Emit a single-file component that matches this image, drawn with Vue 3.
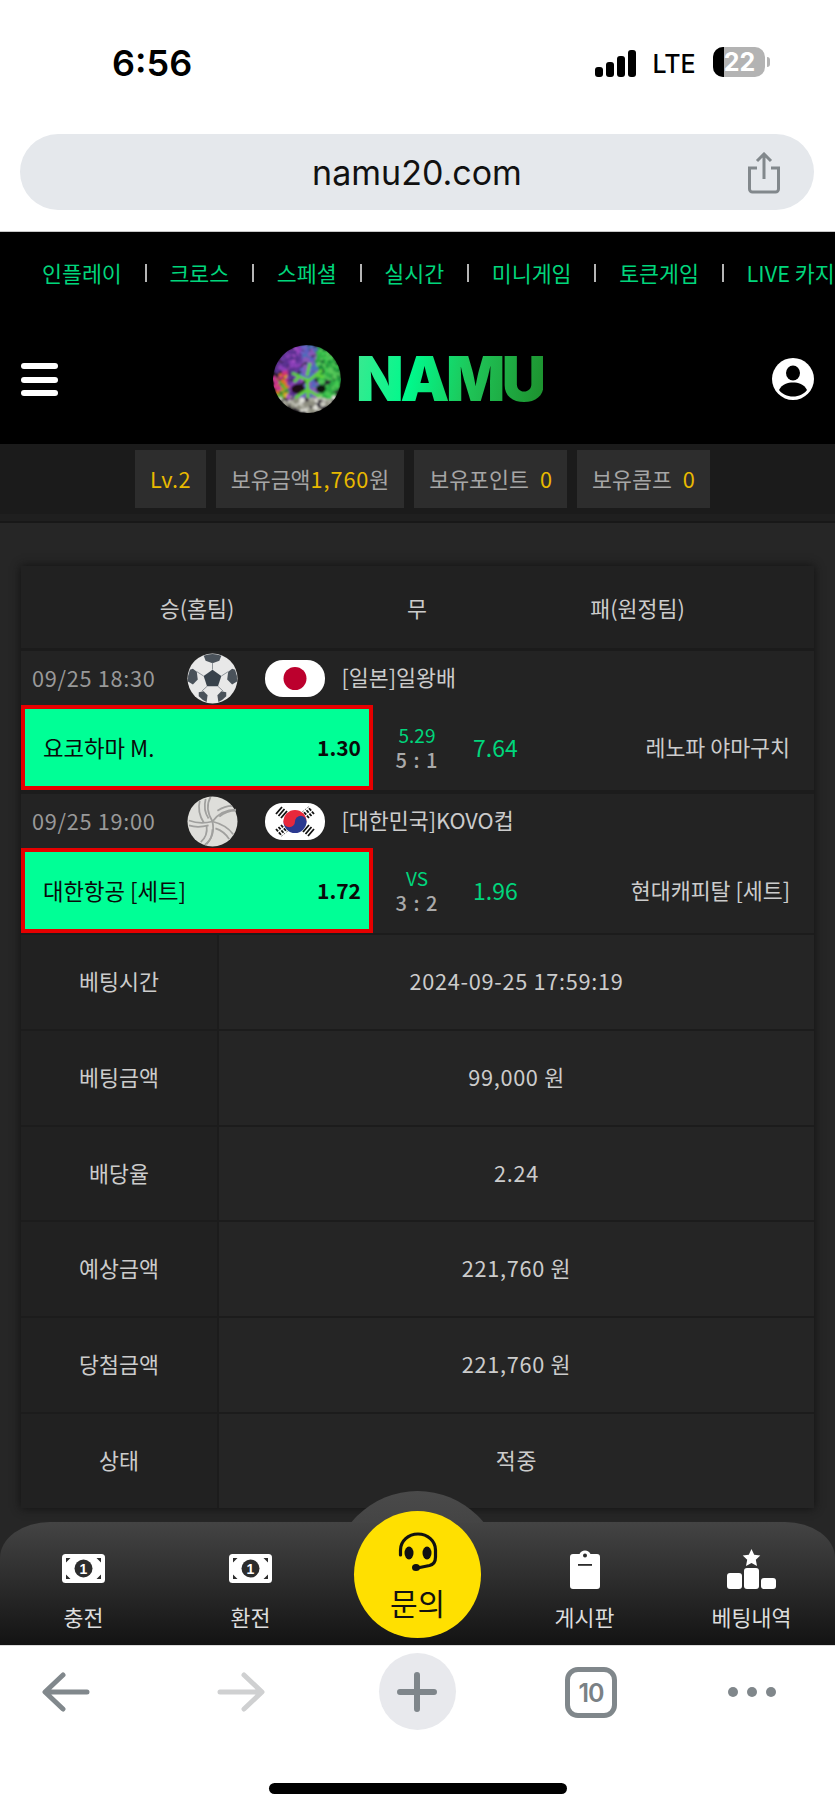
<template>
  <div class="page">
    <!-- 브라우저 상단 -->
    <div class="phone-top">
      <div class="status">
        <span class="clock">6:56</span>
        <div class="status-right">
          <div class="signal">
            <i v-for="h in signalBars" :key="h" :style="{ height: h + 'px' }"></i>
          </div>
          <span class="lte">LTE</span>
          <div class="battery"><b></b><span>22</span></div>
          <i class="nub"></i>
        </div>
      </div>
      <div class="urlbar">
        <span>namu20.com</span>
        <svg class="share" width="36" height="42" viewBox="0 0 36 42" fill="none" stroke="#82888c" stroke-width="3">
          <path d="M18 27V3M11 9l7-7 7 7" />
          <path d="M11 16H3.500v21a3 3 0 0 0 3 3h23a3 3 0 0 0 3-3V16H25" />
        </svg>
      </div>
    </div>

    <nav class="site-nav">
      <template v-for="(m, i) in menus" :key="m">
        <i v-if="i" class="sep"></i>
        <a>{{ m }}</a>
      </template>
    </nav>

    <header class="site-header">
      <div class="burger"><i></i><i></i><i></i></div>
      <div class="logo">
        <svg class="tree" width="72" height="74" viewBox="0 0 72 74">
          <defs>
            <clipPath id="treeClip"><circle cx="36" cy="37" r="34" /></clipPath>
            <filter id="soft"><feGaussianBlur stdDeviation="1" /></filter>
          </defs>
          <g filter="url(#soft)" clip-path="url(#treeClip)">
            <circle cx="36" cy="37" r="34" fill="#2a2230" />
            <circle v-for="(l, i) in leaves" :key="i" :cx="l.x" :cy="l.y" :r="l.r" :fill="l.c" />
            <ellipse cx="27" cy="47" rx="7" ry="5" fill="#1c1018" />
            <ellipse cx="50" cy="47" rx="5" ry="4" fill="#10180f" />
            <path d="M37 56c0-9-1-14-1-20M36 38L21 31M36 40l15-12M36 34l3-13M36 48L24 56M37 48l12 7M28 35l-5 5M45 33l8 2" stroke="#5fd13c" stroke-width="3" fill="none" />
          </g>
        </svg>
        <span class="logo-word">NAMU</span>
      </div>
      <svg class="user" width="42" height="42" viewBox="0 0 42 42">
        <circle cx="21" cy="21" r="21" fill="#fff" />
        <ellipse cx="21" cy="15" rx="7" ry="7.500" fill="#000" />
        <path d="M7 32c3-6 9-7.500 14-7.500S32 26 35 32c-3 4-8 6.500-14 6.500S10 36 7 32z" fill="#000" />
      </svg>
    </header>

    <div class="infobar">
      <div class="chip gold">Lv.2</div>
      <div class="chip">보유금액<em class="money">1,760</em>원</div>
      <div class="chip">보유포인트<em class="sp">0</em></div>
      <div class="chip">보유콤프<em class="sp">0</em></div>
    </div>
    <div class="infobar-edge"></div>

    <main class="content">
      <section class="card">
        <div class="card-head">
          <span>승(홈팀)</span>
          <span>무</span>
          <span>패(원정팀)</span>
        </div>

        <div v-for="g in games" :key="g.time" class="match">
          <div class="match-info">
            <span class="time">{{ g.time }}</span>
            <svg v-if="g.sport === 'soccer'" class="ball" viewBox="0 0 52 52">
              <circle cx="26" cy="26" r="25.500" fill="#e8e8e8" />
              <path d="M26 17l9 6.500-3.400 10.500H20.400L17 23.500z" fill="#39424b" />
              <path d="M26 1a25 25 0 0 0-9 1.800L19 8l7 2.500L33 8l2-5.200A25 25 0 0 0 26 1z" fill="#4a525a" />
              <path d="M3 17a25 25 0 0 0-2 12l5 3 5-5-1-8-4-3z" fill="#4a525a" />
              <path d="M49 17a25 25 0 0 1 2 12l-5 3-5-5 1-8 4-3z" fill="#4a525a" />
              <path d="M12 44a25 25 0 0 0 8 6l1-7-4-4-5 1z" fill="#4a525a" />
              <path d="M40 44a25 25 0 0 1-8 6l-1-7 4-4 5 1z" fill="#4a525a" />
              <path d="M26 10v7M17 23.500l-7-4.500M35 23.500l7-4.500M20.400 34L15 39M31.600 34L37 39" stroke="#8c9298" stroke-width="1" />
            </svg>
            <svg v-else class="ball" viewBox="0 0 52 52">
              <circle cx="26" cy="26" r="25.500" fill="#dededa" />
              <g fill="none" stroke="#a0a09e" stroke-width="1.800">
                <path d="M26 26C20 16 20 8 24 1M26 26c6-8 14-12 24-12M26 26c2 10 0 18-8 24" />
                <path d="M19 3c-2 8-1 14 3 20M13 5c-2 8-1 14 4 22M33 21c6-5 11-6 17-6M31 15c6-4 11-5 15-5M26 34c0 6-2 11-6 15M20 30c1 8-1 13-6 17" />
                <path d="M26 26c-8 2-16 2-24-1M26 26c8 2 16 6 21 13M22 30c-8 2-14 2-20 0M29 33c6 2 11 6 14 11" />
              </g>
            </svg>
            <span class="flag">
              <svg v-if="g.sport === 'soccer'" width="60" height="37" viewBox="0 0 60 37">
                <circle cx="30" cy="18.500" r="11.500" fill="#bc002d" />
              </svg>
              <svg v-else width="60" height="37" viewBox="0 0 60 37">
                <path d="M18.500 18.500a11.500 11.500 0 0 1 23 0z" fill="#e8283c" />
                <path d="M18.500 18.500a11.500 11.500 0 0 0 23 0z" fill="#2b3990" />
                <circle cx="24.250" cy="18.500" r="5.750" fill="#e8283c" />
                <circle cx="35.750" cy="18.500" r="5.750" fill="#2b3990" />
                <g stroke="#111" stroke-width="1.800">
                  <path d="M11 11l6-7M13.500 13l6-7M16 15l6-7" />
                  <path d="M49 11l-6-7M46.500 13l-6-7M44 15l-6-7" stroke-dasharray="3.200 1.200" />
                  <path d="M11 26l6 7M13.500 24l6 7M16 22l6 7" stroke-dasharray="3.200 1.200" />
                  <path d="M49 26l-6 7M46.500 24l-6 7M44 22l-6 7" />
                </g>
              </svg>
            </span>
            <span class="league">{{ g.league }}</span>
          </div>
          <div class="match-bet">
            <div class="pick">
              <span>{{ g.home }}</span>
              <b>{{ g.homeOdds }}</b>
            </div>
            <div class="mid">
              <span class="draw">{{ g.draw }}</span>
              <span class="score">{{ g.score }}</span>
            </div>
            <div class="away">
              <span class="away-odds">{{ g.awayOdds }}</span>
              <span>{{ g.away }}</span>
            </div>
          </div>
        </div>

        <div class="details">
          <div v-for="d in details" :key="d.label" class="detail">
            <div class="detail-label">{{ d.label }}</div>
            <div class="detail-value">{{ d.value }}</div>
          </div>
        </div>
      </section>
    </main>

    <footer class="tabbar">
      <div class="bump"></div>
      <a class="tab">
        <span class="tab-icon">
          <svg class="bill" width="43" height="29" viewBox="0 0 43 29">
            <rect width="43" height="29" rx="3.500" fill="#fff" />
            <path d="M4 4h4.500L4 8.500zM39 4h-4.500L39 8.500zM4 25h4.500L4 20.500zM39 25h-4.500L39 20.500z" fill="#2c2c2c" />
            <circle cx="21.500" cy="14.500" r="9" fill="#2c2c2c" />
            <text x="21.500" y="19.500" class="bill-num">1</text>
          </svg>
        </span>
        <span>충전</span>
      </a>
      <a class="tab">
        <span class="tab-icon">
          <svg class="bill" width="43" height="29" viewBox="0 0 43 29">
            <rect width="43" height="29" rx="3.500" fill="#fff" />
            <path d="M4 4h4.500L4 8.500zM39 4h-4.500L39 8.500zM4 25h4.500L4 20.500zM39 25h-4.500L39 20.500z" fill="#2c2c2c" />
            <circle cx="21.500" cy="14.500" r="9" fill="#2c2c2c" />
            <text x="21.500" y="19.500" class="bill-num">1</text>
          </svg>
        </span>
        <span>환전</span>
      </a>
      <div class="tab-spacer"></div>
      <a class="tab">
        <span class="tab-icon">
          <svg width="30" height="40" viewBox="0 0 30 40">
            <path d="M3 5h6.500a6 6 0 0 1 11 0H27a3 3 0 0 1 3 3v29a3 3 0 0 1-3 3H3a3 3 0 0 1-3-3V8a3 3 0 0 1 3-3z" fill="#fff" />
            <circle cx="15" cy="6.500" r="2" fill="#2c2c2c" />
            <rect x="8" y="15" width="14" height="1.800" fill="#2c2c2c" />
          </svg>
        </span>
        <span>게시판</span>
      </a>
      <a class="tab">
        <span class="tab-icon">
          <svg width="49" height="40" viewBox="0 0 49 40">
            <path d="M24.500 0l2.700 5.700 6.100.8-4.500 4.300 1.200 6.200-5.500-3-5.500 3 1.200-6.200-4.500-4.300 6.100-.8z" fill="#fff" />
            <rect x="0" y="24" width="15" height="16" rx="3" fill="#fff" />
            <rect x="17" y="19" width="15" height="21" rx="3" fill="#fff" />
            <rect x="34" y="29" width="15" height="11" rx="3" fill="#fff" />
          </svg>
        </span>
        <span>베팅내역</span>
      </a>
      <a class="ask">
        <svg width="40" height="40" viewBox="0 0 40 40" fill="none">
          <path d="M2.500 23V18a17.500 16 0 0 1 35 0v7c0 5-2 7.500-6 8.500l-11 2.300" stroke="#111" stroke-width="3.200" stroke-linecap="round" />
          <ellipse cx="11" cy="21" rx="4.500" ry="6.500" fill="#111" />
          <ellipse cx="29" cy="21" rx="4.500" ry="6.500" fill="#111" />
          <ellipse cx="18" cy="35.500" rx="4" ry="3.500" fill="#111" />
        </svg>
        <span>문의</span>
      </a>
    </footer>

    <!-- 브라우저 하단 -->
    <div class="toolbar">
      <div class="tools">
        <svg width="48" height="40" viewBox="0 0 48 40" fill="none" stroke="#81888c" stroke-width="5" stroke-linecap="round" stroke-linejoin="round">
          <path d="M45 20H4M21 3L3 20l18 17" />
        </svg>
        <svg width="48" height="40" viewBox="0 0 48 40" fill="none" stroke="#cfd0d1" stroke-width="5" stroke-linecap="round" stroke-linejoin="round">
          <path d="M3 20h41M27 3l18 17-18 17" />
        </svg>
        <div class="plus">
          <svg width="40" height="40" viewBox="0 0 40 40" stroke="#7f868b" stroke-width="6" stroke-linecap="round">
            <path d="M20 3v34M3 20h34" />
          </svg>
        </div>
        <div class="tabs-count">10</div>
        <div class="dots"><i></i><i></i><i></i></div>
      </div>
      <div class="home-bar"></div>
    </div>
  </div>
</template>

<script setup>
const signalBars = [10, 15, 21, 27];

const menus = ["인플레이", "크로스", "스페셜", "실시간", "미니게임", "토큰게임", "LIVE 카지노"];

const games = [
  {
    time: "09/25 18:30",
    sport: "soccer",
    league: "[일본]일왕배",
    home: "요코하마 M.",
    homeOdds: "1.30",
    draw: "5.29",
    score: "5 : 1",
    awayOdds: "7.64",
    away: "레노파 야마구치",
  },
  {
    time: "09/25 19:00",
    sport: "volley",
    league: "[대한민국]KOVO컵",
    home: "대한항공 [세트]",
    homeOdds: "1.72",
    draw: "VS",
    score: "3 : 2",
    awayOdds: "1.96",
    away: "현대캐피탈 [세트]",
  },
];

const details = [
  { label: "베팅시간", value: "2024-09-25 17:59:19" },
  { label: "베팅금액", value: "99,000 원" },
  { label: "배당율", value: "2.24" },
  { label: "예상금액", value: "221,760 원" },
  { label: "당첨금액", value: "221,760 원" },
  { label: "상태", value: "적중" },
];

// 로고 나무의 잎: 위치에 따라 색이 바뀌는 작은 점들
let seed = 7;
const rnd = () => {
  seed = (seed * 16807) % 2147483647;
  return seed / 2147483647;
};

const pick = (list) => list[Math.floor(rnd() * list.length)];

const leafColor = (x, y) => {
  if (y > 55) return pick(["#c9c9bf", "#e0e0d8", "#a9a99c", "#8d8d7f"]);
  if (x > 46) return pick(["#2fae45", "#3fc94f", "#1f8f3a", "#58c85a"]);
  if (x < 17 && y > 30) return pick(["#d23a5a", "#e0b020", "#c93090", "#e07020", "#60b030"]);
  if (x < 30) return pick(["#8a3fb8", "#a84fc8", "#6a3aa0", "#5a3090"]);
  return pick(["#5a60c0", "#7060c8", "#4a70b8", "#8a58b8"]);
};

const leaves = Array.from({ length: 500 }, () => {
  const a = rnd() * Math.PI * 2;
  const d = Math.sqrt(rnd()) * 34;
  const x = 36 + Math.cos(a) * d;
  const y = 37 + Math.sin(a) * d;
  return { x, y, r: 1.4 + rnd() * 1.6, c: leafColor(x, y) };
});
</script>

<style scoped>
.page {
  width: 835px;
  height: 1811px;
  overflow: hidden;
  background: #262626;
  font-family: "Noto Sans CJK KR", "Noto Sans", sans-serif;
  font-size: 21.700px;
  color: #ccc;
}

.phone-top {
  height: 232px;
  box-sizing: border-box;
  background: #fff;
  border-bottom: 1px solid #c8c8c8;
  font-family: Inter, "Liberation Sans", sans-serif;
  color: #000;
}

.status {
  height: 134px;
  position: relative;
}

.clock {
  position: absolute;
  left: 112px;
  top: 41px;
  font-size: 36px;
  line-height: 44px;
  font-weight: 600;
}

.status-right {
  position: absolute;
  left: 595px;
  top: 47px;
  display: flex;
  align-items: flex-end;
  height: 30px;
}

.signal {
  display: flex;
  align-items: flex-end;
  gap: 3.500px;
  height: 28px;
}

.signal i {
  width: 7.500px;
  background: #000;
  border-radius: 3px;
}

.lte {
  margin-left: 17px;
  font-size: 25px;
  line-height: 30px;
  height: 28px;
  font-weight: 500;
}

.battery {
  position: relative;
  margin-left: 17px;
  width: 52px;
  height: 30px;
  border-radius: 10px;
  background: #b3b3b3;
}

.battery b {
  display: block;
  width: 11px;
  height: 100%;
  background: #000;
  border-radius: 10px 0 0 10px;
}

.battery span {
  position: absolute;
  left: 11px;
  top: 0;
  font-size: 25px;
  line-height: 30px;
  font-weight: 700;
  color: #fff;
}

.nub {
  width: 3px;
  height: 10px;
  margin: 0 0 10px 2px;
  background: #b3b3b3;
  border-radius: 0 3px 3px 0;
}

.urlbar {
  position: relative;
  margin: 0 21px 0 20px;
  height: 76px;
  border-radius: 38px;
  background: #e5e8ec;
  display: flex;
  align-items: center;
  justify-content: center;
  font-size: 34px;
  color: #111;
}

.share {
  position: absolute;
  left: 726px;
  top: 18px;
}

.site-nav {
  height: 82px;
  box-sizing: border-box;
  padding: 23px 0 0 42px;
  background: #000;
  display: flex;
  align-items: flex-start;
  white-space: nowrap;
  overflow: hidden;
  color: #00d67c;
  line-height: 36px;
}

.site-nav .sep {
  flex: none;
  width: 2px;
  height: 18px;
  margin: 9px 22.800px 0;
  background: #b5b5b5;
}

.site-header {
  height: 130px;
  background: #000;
  position: relative;
  display: flex;
  align-items: flex-start;
  justify-content: space-between;
  padding: 0 21px;
  box-sizing: border-box;
}

.burger {
  margin-top: 49px;
  width: 37px;
  display: flex;
  flex-direction: column;
  gap: 7.500px;
}

.burger i {
  height: 6px;
  border-radius: 3px;
  background: #fff;
}

.logo {
  position: absolute;
  left: 271px;
  top: 28px;
  display: flex;
  align-items: center;
}

.logo-word {
  margin-left: 13px;
  font-family: Inter, "Liberation Sans", sans-serif;
  font-weight: 900;
  font-size: 62px;
  line-height: 74px;
  letter-spacing: -3.500px;
  background: linear-gradient(100deg, #3ce890 0%, #00f98c 30%, #1fc558 60%, #1d8f2c 100%);
  -webkit-background-clip: text;
  background-clip: text;
  color: transparent;
  filter: blur(0.700px);
}

.user {
  margin-top: 44px;
}

.infobar {
  height: 64px;
  box-sizing: border-box;
  padding: 6px 0 0 10px;
  background: #1b1b1b;
  display: flex;
  justify-content: center;
  gap: 10px;
}

.chip {
  height: 58px;
  padding: 0 15px;
  background: #2d2d2d;
  color: #a6a6a6;
  line-height: 58px;
  white-space: nowrap;
}

.chip em {
  font-style: normal;
  color: #e8b900;
}

.chip em.money {
  letter-spacing: 0.900px;
}

.chip em.sp {
  margin-left: 11px;
}

.chip.gold {
  color: #e8b900;
  letter-spacing: 0.300px;
}

.infobar-edge {
  height: 15px;
  background: linear-gradient(#1b1b1b 40%, #1f1f1f 40%, #1f1f1f 90%, #181818 90%);
}

.content {
  height: 999px;
  box-sizing: border-box;
  padding: 43px 21px 0;
}

.card {
  background: #232323;
  box-shadow: 0 0 9px #101010;
}

.card-head {
  height: 85px;
  box-sizing: border-box;
  display: grid;
  grid-template-columns: 352px 88px 353px;
  align-items: center;
  text-align: center;
  background: #212121;
  border-bottom: 3px solid #1b1b1b;
}

.match + .match {
  border-top: 4px solid #1c1c1c;
}

.match-info {
  height: 54px;
  display: flex;
  align-items: center;
  padding-left: 11px;
}

.time {
  width: 154.500px;
  margin-top: -2px;
  color: #999;
  letter-spacing: 0.700px;
}

.ball {
  width: 51px;
  height: 51px;
  flex: none;
}

.flag {
  flex: none;
  width: 60px;
  height: 37px;
  margin-left: 27px;
  margin-right: 17px;
  border-radius: 18px;
  background: #fff;
  overflow: hidden;
}

.flag svg {
  display: block;
}

.league {
  color: #ccc;
  margin-top: -3px;
}

.match-bet {
  height: 85px;
  display: grid;
  grid-template-columns: 352px 88px 353px;
}

.pick {
  box-sizing: border-box;
  border: 4px solid #e60000;
  background: #00ff96;
  color: #0a0a0a;
  display: flex;
  align-items: center;
  justify-content: space-between;
  padding: 0 8px 2px 18px;
  font-size: 22.300px;
}

.pick b {
  font-size: 21px;
  font-weight: 700;
}

.mid {
  display: flex;
  flex-direction: column;
  align-items: center;
  justify-content: center;
}

.draw {
  font-size: 19px;
  line-height: 23px;
  color: #00d67c;
}

.score {
  font-size: 20px;
  line-height: 27px;
  color: #aaa;
  font-weight: 500;
  letter-spacing: 1px;
}

.away {
  display: flex;
  align-items: center;
  justify-content: space-between;
  padding: 0 24px 2px 12px;
}

.away-odds {
  color: #00d67c;
  font-size: 23px;
}

.detail {
  display: grid;
  grid-template-columns: 196px 1fr;
  height: 95.800px;
  box-sizing: border-box;
  border-top: 2px solid #1c1c1c;
  text-align: center;
}

.detail-label {
  background: #212121;
  line-height: 92px;
}

.detail-value {
  background: #252525;
  border-left: 2px solid #1c1c1c;
  line-height: 92px;
  letter-spacing: 0.700px;
}

.tabbar {
  position: relative;
  height: 123px;
  border-radius: 50px 50px 0 0 / 36px 36px 0 0;
  background: linear-gradient(#444, #131313);
  display: grid;
  grid-template-columns: repeat(5, 1fr);
  color: #ddd;
}

.bump {
  position: absolute;
  left: 349px;
  top: -31px;
  width: 137px;
  height: 32px;
  overflow: hidden;
}

.bump::before {
  content: "";
  position: absolute;
  left: -17px;
  top: 0;
  width: 171px;
  height: 171px;
  border-radius: 50%;
  background: linear-gradient(#4a4a4a, #444 20%);
}

.tab {
  position: relative;
  display: flex;
  flex-direction: column;
  align-items: center;
  padding-top: 27px;
}

.tab-icon {
  height: 40px;
  display: flex;
  align-items: center;
  margin-bottom: 12px;
}

.tab-icon svg {
  display: block;
}

.tab-icon .bill {
  margin-top: -2px;
}

.bill-num {
  font-family: "Liberation Sans", sans-serif;
  font-size: 14px;
  font-weight: 700;
  fill: #fff;
  text-anchor: middle;
}

.ask {
  position: absolute;
  left: 354px;
  top: -11px;
  width: 127px;
  height: 127px;
  border-radius: 50%;
  background: #ffe000;
  color: #111;
  display: flex;
  flex-direction: column;
  align-items: center;
  padding-top: 21px;
  box-sizing: border-box;
  font-size: 30px;
  line-height: 40px;
}

.ask span {
  margin-top: 10px;
}

.toolbar {
  height: 166px;
  box-sizing: border-box;
  background: #fff;
  border-top: 1px solid #ddd;
  position: relative;
}

.tools {
  display: grid;
  grid-template-columns: 132px 218px 134px 214px 108px;
  justify-items: center;
  align-items: center;
  padding-top: 7px;
  height: 77px;
}

.plus {
  width: 77px;
  height: 77px;
  border-radius: 50%;
  background: #e8e9ed;
  display: flex;
  align-items: center;
  justify-content: center;
}

.tabs-count {
  width: 52px;
  height: 51px;
  margin-top: 2px;
  box-sizing: border-box;
  border: 5px solid #80878b;
  border-radius: 13px;
  color: #7a8185;
  text-align: center;
  font-family: Inter, sans-serif;
  font-size: 25px;
  font-weight: 600;
  line-height: 42px;
  letter-spacing: -1px;
}

.dots {
  display: flex;
  gap: 9px;
}

.dots i {
  width: 10px;
  height: 10px;
  border-radius: 50%;
  background: #80878b;
}

.home-bar {
  position: absolute;
  left: 269px;
  bottom: 17px;
  width: 298px;
  height: 11px;
  border-radius: 6px;
  background: #000;
}
</style>

<style>
html,
body {
  margin: 0;
  background: #262626;
}
</style>
